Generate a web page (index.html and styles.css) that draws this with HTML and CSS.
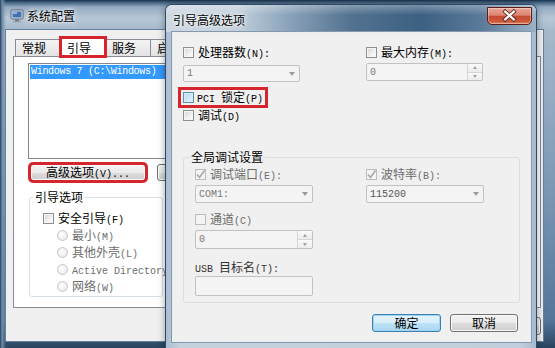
FILE: index.html
```html
<!DOCTYPE html>
<html lang="zh-CN">
<head>
    <meta charset="UTF-8">
    <meta name="viewport" content="width=device-width, initial-scale=1.0">
    <title>系统配置 - 引导高级选项</title>
    <link rel="stylesheet" href="styles.css">
</head>
<body>
<div class="desktop">

    <!-- 系统配置 window (behind) -->
    <div class="window main-window">
        <div class="main-title">
            <svg class="app-icon" width="14" height="14" viewBox="0 0 14 14">
                <rect x="1" y="1" width="12" height="9" rx="1" fill="#dfe4ea" stroke="#5b6673"/>
                <rect x="2.5" y="2.5" width="9" height="6" fill="#3f73b3"/>
                <rect x="3" y="3" width="4" height="2" fill="#8fb6e3"/>
                <rect x="5" y="10.5" width="4" height="1.5" fill="#6b7480"/>
                <rect x="3" y="12" width="8" height="1.5" fill="#9aa3ad"/>
            </svg>
            <span class="title-text">系统配置</span>
        </div>
        <div class="main-client">
            <div class="tabs">
                <span class="tab">常规</span>
                <span class="tab active marked">引导</span>
                <span class="tab">服务</span>
                <span class="tab wide">启动</span>
            </div>
            <div class="tab-panel">
                <div class="listbox">
                    <div class="list-item selected en">Windows 7 (C:\Windows)</div>
                </div>
                <div class="panel-buttons">
                    <button class="btn advanced marked"><span class="txt"><span>高级选项</span><span class="en">(V)...</span></span></button>
                    <!-- mostly hidden under the dialog -->
                    <button class="btn set-default"></button>
                </div>
                <fieldset class="group boot-options">
                    <legend>引导选项</legend>
                    <label class="check"><span class="box"></span><span class="txt"><span>安全引导</span><span class="en">(F)</span></span></label>
                    <div class="radios">
                        <label class="radio disabled"><span class="dot"></span><span class="txt"><span>最小</span><span class="en">(M)</span></span></label>
                        <label class="radio disabled"><span class="dot"></span><span class="txt"><span>其他外壳</span><span class="en">(L)</span></span></label>
                        <label class="radio disabled"><span class="dot"></span><span class="txt"><span class="en">Active Directory</span></span></label>
                        <label class="radio disabled"><span class="dot"></span><span class="txt"><span>网络</span><span class="en">(W)</span></span></label>
                    </div>
                </fieldset>
            </div>
            <div class="main-buttons">
                <button class="btn"></button>
            </div>
        </div>
    </div>

    <!-- 引导高级选项 dialog (front) -->
    <div class="window dialog">
        <div class="dlg-title">
            <span class="title-text">引导高级选项</span>
            <button class="close-btn">
                <svg width="45" height="18" viewBox="0 0 45 18">
                    <path d="M18 4.5 L27 12.5 M27 4.5 L18 12.5" stroke="#5e2418" stroke-width="4.2" stroke-linecap="square"/>
                    <path d="M18 4.5 L27 12.5 M27 4.5 L18 12.5" stroke="#ffffff" stroke-width="2.4" stroke-linecap="square"/>
                </svg>
            </button>
        </div>
        <div class="dlg-client">
            <div class="pair">
                <div class="field">
                    <label class="check"><span class="box"></span><span class="txt"><span>处理器数</span><span class="en">(N):</span></span></label>
                    <div class="combo"><span class="en">1</span><span class="arrow"></span></div>
                </div>
                <div class="field">
                    <label class="check"><span class="box"></span><span class="txt"><span>最大内存</span><span class="en">(M):</span></span></label>
                    <div class="spin"><span class="en">0</span><span class="spin-btns"><span class="up"></span><span class="down"></span></span></div>
                </div>
            </div>
            <label class="check pci marked"><span class="box hot"></span><span class="txt"><span class="en">PCI </span><span>锁定</span><span class="en">(P)</span></span></label>
            <label class="check debug"><span class="box"></span><span class="txt"><span>调试</span><span class="en">(D)</span></span></label>

            <fieldset class="group debug-settings">
                <legend>全局调试设置</legend>
                <div class="group-body">
                    <div class="pair">
                        <div class="field">
                            <label class="check disabled"><span class="box checked"><svg width="9" height="9" viewBox="0 0 9 9"><path d="M1 4.5 L3.5 7.5 L8.5 0.5" fill="none" stroke="#a9a9a9" stroke-width="1.6"/></svg></span><span class="txt"><span>调试端口</span><span class="en">(E):</span></span></label>
                            <div class="combo"><span class="en">COM1:</span><span class="arrow"></span></div>
                        </div>
                        <div class="field">
                            <label class="check disabled"><span class="box checked"><svg width="9" height="9" viewBox="0 0 9 9"><path d="M1 4.5 L3.5 7.5 L8.5 0.5" fill="none" stroke="#a9a9a9" stroke-width="1.6"/></svg></span><span class="txt"><span>波特率</span><span class="en">(B):</span></span></label>
                            <div class="combo dark"><span class="en">115200</span><span class="arrow"></span></div>
                        </div>
                    </div>
                    <div class="field channel">
                        <label class="check disabled"><span class="box"></span><span class="txt"><span>通道</span><span class="en">(C)</span></span></label>
                        <div class="spin tall"><span class="en">0</span><span class="spin-btns"><span class="up"></span><span class="down"></span></span></div>
                    </div>
                    <div class="field usb">
                        <div class="field-label"><span class="txt"><span class="en">USB </span><span>目标名</span><span class="en">(T):</span></span></div>
                        <div class="textbox"></div>
                    </div>
                </div>
            </fieldset>

            <div class="dlg-buttons">
                <button class="btn default">确定</button>
                <button class="btn">取消</button>
            </div>
        </div>
    </div>

</div>
</body>
</html>
```

FILE: styles.css
```css
* {
    box-sizing: border-box;
}

body {
    margin: 0;
    width: 555px;
    height: 348px;
    overflow: hidden;
    background-color: #132539;
    font-family: "Noto Sans CJK SC", "Noto Sans", sans-serif;
    font-size: 12px;
    color: #000;
}

.desktop {
    position: relative;
    width: 555px;
    height: 348px;
    overflow: hidden;
}

/* SimSun-like half width latin */
.en {
    font-family: "Liberation Mono", monospace;
    font-size: 10px;
    white-space: pre;
}

.txt {
    display: block;
    line-height: 13px;
    white-space: nowrap;
}

button {
    font-family: inherit;
    font-size: 12px;
    color: #000;
    padding: 0;
}

.marked {
    outline: 3px solid #d5262e;
}

/* ---------- windows ---------- */

.window {
    position: absolute;
    display: flex;
    flex-direction: column;
}

.title-text {
    line-height: 14px;
    text-shadow: 0 0 6px #fff, 0 0 3px #fff;
}

.main-window {
    left: 0;
    top: 0;
    width: 555px;
    height: 348px;
    padding: 0 12px 7px 6px;
    background:
        linear-gradient(90deg, #223e5a 0, #6f8ca8 2px, rgba(110, 140, 170, 0) 6px),
        linear-gradient(180deg, #17304a 0, #3c5b7a 2px, #93aac1 7px, #b7c7d6 18px, #a6b9cc 30px, #7f9bb6 50%, #55759a 92%, #28445f 100%);
}

.main-title {
    height: 30px;
    display: flex;
    align-items: center;
    gap: 3px;
    padding: 1px 0 0 4px;
}

.app-icon {
    flex: none;
}

.main-client {
    flex: 1;
    display: flex;
    flex-direction: column;
    background-color: #f0f0f0;
    padding: 7px 2px 0 7px;
    box-shadow: 0 0 0 1px #6580a0;
}

.tabs {
    display: flex;
    align-items: flex-end;
    height: 19px;
    padding-left: 2px;
}

.tab {
    height: 17px;
    width: 46px;
    display: flex;
    align-items: center;
    padding-left: 6px;
    border: 1px solid #898c95;
    border-bottom: none;
    margin-right: -1px;
    background: linear-gradient(#f3f3f3, #e3e3e3);
    line-height: 14px;
}

.tab.active {
    position: relative;
    z-index: 1;
    height: 20px;
    margin-bottom: -1px;
    background: #fff;
    outline-offset: -2px;
}

.tab.wide {
    width: 60px;
}

.tab-panel {
    height: 252px;
    background-color: #fff;
    border: 1px solid #898c95;
    padding: 6px 14px 0 14px;
}

.listbox {
    height: 96px;
    border: 1px solid #828790;
    padding: 1px;
}

.list-item {
    height: 14px;
    line-height: 14px;
    padding-left: 1px;
    letter-spacing: -0.3px;
}

.list-item.selected {
    background-color: #3399ff;
    color: #fff;
}

.panel-buttons {
    display: flex;
    gap: 11px;
    margin-top: 5px;
    padding-left: 2px;
}

.btn {
    height: 17px;
    border: 1px solid #707070;
    border-radius: 3px;
    background: linear-gradient(#f2f2f2 0, #ebebeb 50%, #dddddd 50%, #cfcfcf 100%);
    box-shadow: inset 0 0 0 1px #fbfbfb;
    line-height: 14px;
}

.btn.advanced {
    width: 116px;
    outline-offset: -1px;
}

.btn.set-default {
    width: 120px;
}

.group {
    margin: 0;
    min-width: 0;
    border: 1px solid #d5dfe5;
    border-radius: 3px;
}

.group legend {
    padding: 0 2px;
    line-height: 14px;
}

.boot-options {
    width: 134px;
    margin: 9px 0 0 1px;
    padding: 8px 0 3px 3px;
}

.boot-options > .check {
    margin-left: 10px;
}

.radios {
    display: flex;
    flex-direction: column;
    gap: 4px;
    margin: 4px 0 0 24px;
}

.main-buttons {
    display: flex;
    justify-content: flex-end;
    margin-top: 9px;
}

.main-buttons .btn {
    width: 75px;
    height: 18px;
}

/* ---------- checkboxes & radios ---------- */

.check,
.radio,
.field-label {
    display: flex;
    align-items: center;
    height: 13px;
}

.disabled {
    color: #6d6d6d;
}

.box {
    flex: none;
    width: 11px;
    height: 11px;
    margin-right: 4px;
    border: 1px solid #8f8f8f;
    background: linear-gradient(135deg, #d4d4d4, #f2f2f2 60%, #fff);
    box-shadow: inset 0 0 0 1px #f6f6f6;
    display: flex;
    align-items: center;
    justify-content: center;
}

.box.hot {
    margin-right: 3px;
    border-color: #5f8fae;
    background: linear-gradient(135deg, #b4d8f1, #e6f3fb);
    box-shadow: inset 0 0 0 1px #d7ecfa;
}

.disabled .box {
    border-color: #bcbcbc;
    background: #f4f4f4;
    box-shadow: none;
}

.dot {
    flex: none;
    width: 11px;
    height: 11px;
    margin-right: 4px;
    border-radius: 50%;
    border: 1px solid #c6c6c6;
    background: radial-gradient(circle at 40% 40%, #fff, #e3e3e3);
}

/* ---------- dialog ---------- */

.dialog {
    left: 166px;
    top: 5px;
    width: 370px;
    height: 344px;
    border-radius: 6px 6px 0 0;
    background: linear-gradient(90deg, #aabdd0, #c4d2de 4%, #c1cfdc 96%, #a6bacd);
    box-shadow: 0 0 0 1px #2f4a66, 0 0 9px rgba(0, 0, 0, 0.45);
}

.dlg-title {
    height: 27px;
    display: flex;
    align-items: flex-start;
    padding: 0 4px 0 7px;
    border-radius: 6px 6px 0 0;
    background:
        linear-gradient(180deg, rgba(255, 255, 255, 0.3) 0, rgba(255, 255, 255, 0) 10px),
        linear-gradient(90deg, #cdd8e3 0, #c3d0dc 70px, #8da5bc 120px, #52728f 185px, #3d6082 255px, #5a7a99 315px, #9cb2c6 370px);
}

.dlg-title .title-text {
    margin-top: 8px;
}

.close-btn {
    margin: 2px 0 0 auto;
    width: 45px;
    height: 18px;
    border: 1px solid #5a1e16;
    border-radius: 0 0 5px 5px;
    background: linear-gradient(180deg, #eaa797 0, #dc8470 45%, #c54a33 52%, #cd5a3d 85%, #e48a68 100%);
    box-shadow: inset 0 0 0 1px rgba(255, 255, 255, 0.35);
    display: flex;
    align-items: center;
    justify-content: center;
}

.close-btn svg {
    display: block;
}

.dlg-client {
    flex: 1;
    margin: 0 5px 7px 6px;
    background-color: #f0f0f0;
    border: 1px solid #e9eef3;
    box-shadow: 0 0 0 1px #8499ae;
    padding: 13px 12px 0 10px;
}

.pair {
    display: grid;
    grid-template-columns: 183px 117px;
}

.field {
    display: flex;
    flex-direction: column;
    width: 117px;
}

.combo,
.spin,
.textbox {
    height: 18px;
    display: flex;
    align-items: center;
    padding-left: 3px;
    border: 1px solid #c2c2c2;
    border-radius: 2px;
    background-color: #f4f4f4;
    color: #7a7a7a;
}

.field .combo {
    margin-top: 4px;
}

.field .spin {
    margin-top: 4px;
}

.dlg-client > .pair .combo {
    margin-top: 6px;
    height: 17px;
}

.combo.dark {
    color: #555;
}

.combo .arrow {
    margin: 0 4px 0 auto;
    border-left: 3.5px solid transparent;
    border-right: 3.5px solid transparent;
    border-top: 4px solid #9a9a9a;
}

.spin-btns {
    margin-left: auto;
    width: 15px;
    height: 100%;
    display: flex;
    flex-direction: column;
    border-left: 1px solid #d6d6d6;
}

.spin-btns span {
    flex: 1;
    display: flex;
    align-items: center;
    justify-content: center;
    background: linear-gradient(#fafafa, #ececec);
}

.spin-btns .up {
    border-bottom: 1px solid #d6d6d6;
}

.spin-btns .up::after {
    content: "";
    border-left: 2.5px solid transparent;
    border-right: 2.5px solid transparent;
    border-bottom: 3px solid #a0a0a0;
}

.spin-btns .down::after {
    content: "";
    border-left: 2.5px solid transparent;
    border-right: 2.5px solid transparent;
    border-top: 3px solid #a0a0a0;
}

.spin.tall {
    height: 19px;
}

.check.pci {
    width: fit-content;
    height: 11px;
    margin-top: 10px;
    outline-offset: 2px;
}

.check.debug {
    margin-top: 6px;
}

.debug-settings {
    width: 337px;
    margin-top: 28px;
    padding: 4px 0 6px 5px;
}

.group-body {
    margin-left: 6px;
}

.debug-settings .pair {
    grid-template-columns: 171px 118px;
}

.debug-settings .field {
    width: 118px;
}

.field.channel {
    margin-top: 10px;
}

.field.usb {
    margin-top: 12px;
}

.field-label {
    color: #333;
}

.textbox {
    margin-top: 2px;
    height: 20px;
}

.dlg-buttons {
    display: flex;
    justify-content: flex-end;
    gap: 9px;
    margin-top: 11px;
}

.dlg-buttons .btn {
    width: 68px;
    height: 18px;
}

.btn.default {
    width: 69px;
    border-color: #3c7fb1;
    background: linear-gradient(#e6f4fc 0, #d6eefb 50%, #bfe3f7 50%, #a9d7f2 100%);
    box-shadow: inset 0 0 0 1px #9fd4f4;
}
```
